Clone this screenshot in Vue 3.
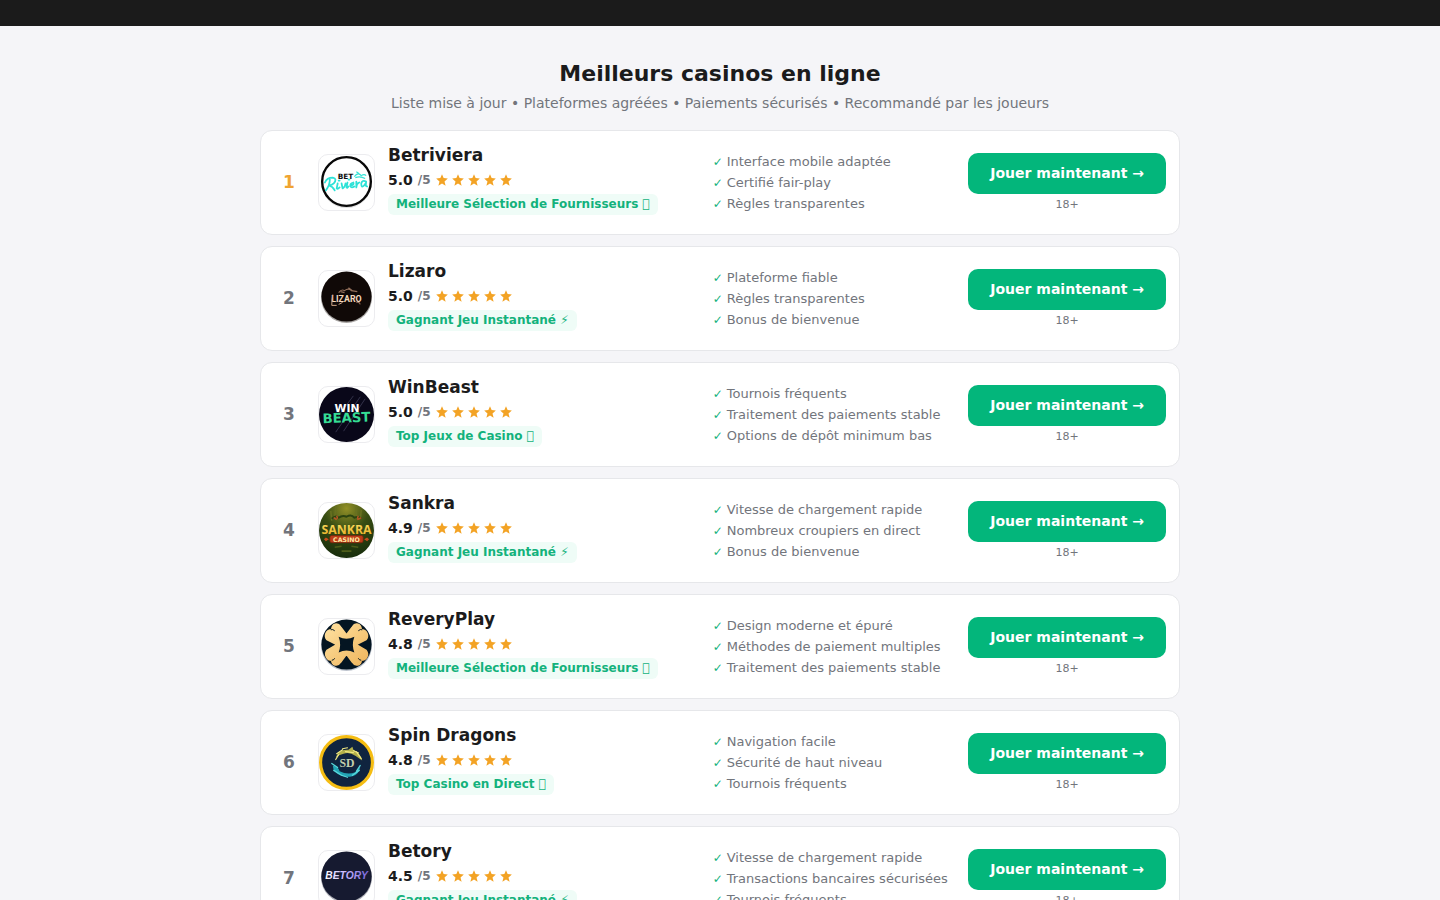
<script setup>
const casinos = [
  { id: 'betriviera', name: 'Betriviera', score: '5.0', badge: 'Meilleure Sélection de Fournisseurs \uE0FF', features: ['Interface mobile adaptée', 'Certifié fair-play', 'Règles transparentes'] },
  { id: 'lizaro', name: 'Lizaro', score: '5.0', badge: 'Gagnant Jeu Instantané ⚡', features: ['Plateforme fiable', 'Règles transparentes', 'Bonus de bienvenue'] },
  { id: 'winbeast', name: 'WinBeast', score: '5.0', badge: 'Top Jeux de Casino \uE0FF', features: ['Tournois fréquents', 'Traitement des paiements stable', 'Options de dépôt minimum bas'] },
  { id: 'sankra', name: 'Sankra', score: '4.9', badge: 'Gagnant Jeu Instantané ⚡', features: ['Vitesse de chargement rapide', 'Nombreux croupiers en direct', 'Bonus de bienvenue'] },
  { id: 'reveryplay', name: 'ReveryPlay', score: '4.8', badge: 'Meilleure Sélection de Fournisseurs \uE0FF', features: ['Design moderne et épuré', 'Méthodes de paiement multiples', 'Traitement des paiements stable'] },
  { id: 'spindragons', name: 'Spin Dragons', score: '4.8', badge: 'Top Casino en Direct \uE0FF', features: ['Navigation facile', 'Sécurité de haut niveau', 'Tournois fréquents'] },
  { id: 'betory', name: 'Betory', score: '4.5', badge: 'Gagnant Jeu Instantané ⚡', features: ['Vitesse de chargement rapide', 'Transactions bancaires sécurisées', 'Tournois fréquents'] },
]
</script>

<template>
  <div class="page">
    <header class="topbar"></header>
    <main class="content">
      <h1 class="title">Meilleurs casinos en ligne</h1>
      <p class="subtitle">Liste mise à jour • Plateformes agréées • Paiements sécurisés • Recommandé par les joueurs</p>
      <section class="list">
        <article v-for="(c, i) in casinos" :key="c.id" class="card">
          <div class="rank" :class="{ first: i === 0 }">{{ i + 1 }}</div>
          <div class="logo">
            <svg v-if="c.id === 'betriviera'" viewBox="0 0 56 56" role="img" :aria-label="c.name">
              <circle cx="28" cy="28.5" r="25.5" fill="#aaa" opacity=".4" />
              <circle cx="28" cy="27" r="24.8" fill="#fff" stroke="#080808" stroke-width="2.4" />
              <text x="27" y="24" text-anchor="middle" font-family="DejaVu Sans, sans-serif" font-weight="700" font-size="7.5" fill="#111">BET</text>
              <path d="M36 22q4-5 7-1q3-2 5 0M37 23q5-2 10 1M41 19l-3-2" fill="none" stroke="#35e3d6" stroke-width="1.2" />
              <g fill="none" stroke="#2de2d7" stroke-width="1.8" stroke-linecap="round" stroke-linejoin="round">
                <path d="M6 28q2-5 8-5q5 1 1 6q-2 2-5 2q4 1 6 5M11 25q0 6-4 11" />
                <path d="M19 29l-1 5q1 1 3-1M23 29l1 5q3-2 3-5M29 28l-1 5q1 1 2-1M32 31q4 0 3-3q-4 1-3 4q1 2 4 0M38 27v6q0-4 3-5M48 27q-4-2-5 2q0 5 3 2l2-3q-1 4 1 4" />
                <path d="M20 26h1M30 25h1" />
              </g>
            </svg>
            <svg v-else-if="c.id === 'lizaro'" viewBox="0 0 56 56" role="img" :aria-label="c.name">
              <circle cx="28" cy="27" r="26" fill="#a8a5a3" />
              <circle cx="28" cy="26" r="25.5" fill="#100907" />
              <path d="M20 22q3-4 6-2q4-3 7 0l6 1M22 21l4 1M30 17l4 3M38 32q3-1 4 2" fill="none" stroke="#906d59" stroke-width="1.2" />
              <text x="28" y="32" text-anchor="middle" font-family="Roboto, sans-serif" font-weight="700" font-size="9" fill="#f3d8be">LIZARO</text>
              <path d="M14 24q-1 6-1 11h5M20 34l4-2" fill="none" stroke="#d4a98a" />
            </svg>
            <svg v-else-if="c.id === 'winbeast'" viewBox="0 0 56 56" role="img" :aria-label="c.name">
              <circle cx="28" cy="28" r="28" fill="#090719" />
              <path d="M42 10L17 46M47 12L25 45M35 9L20 29" stroke="#34334b" stroke-width="1" />
              <text x="28.5" y="25" text-anchor="middle" font-family="DejaVu Sans, sans-serif" font-weight="700" font-size="11" fill="#fff">WIN</text>
              <g transform="rotate(-2 28 31)">
                <text x="28" y="36" text-anchor="middle" font-family="DejaVu Sans, sans-serif" font-weight="700" font-size="13.5" fill="#35dc94">BEAST</text>
              </g>
            </svg>
            <svg v-else-if="c.id === 'sankra'" viewBox="0 0 56 56" role="img" :aria-label="c.name">
              <defs>
                <radialGradient id="jungle" cx=".5" cy=".1" r=".9">
                  <stop offset="0" stop-color="#929027" />
                  <stop offset=".45" stop-color="#384d13" />
                  <stop offset="1" stop-color="#182d0c" />
                </radialGradient>
                <linearGradient id="gold" x2="0" y2="1">
                  <stop offset="0" stop-color="#ffe66a" />
                  <stop offset="1" stop-color="#e4a51d" />
                </linearGradient>
              </defs>
              <circle cx="28" cy="28" r="28" fill="url(#jungle)" />
              <path d="M12 8l1 10M17 4l-1 12M43 7l-1 10M38 4v10" stroke="#687121" stroke-width="1.6" />
              <path d="M16 45l7-1M40 45l-7-1M23 49h10" stroke="#4d5c1a" stroke-width="1.6" />
              <path d="M13 16q4-4 7-1q4-3 8-1q5-3 8 1q4-2 7 1" fill="none" stroke="#2c4410" stroke-width="2" />
              <path d="M15 15l3 2M39 17l4-2M18 13l1 3M40 13l-1 3" stroke="#b85425" stroke-width="1.5" />
              <text x="28" y="31.5" text-anchor="middle" font-family="Open Sans, sans-serif" font-weight="700" font-size="12.5" fill="url(#gold)">SANKRA</text>
              <rect x="11" y="33" width="34" height="7.5" rx="2" fill="#bd3b18" stroke="#76220c" stroke-width=".7" />
              <path d="M5 37l2-2 3 2-3 2zM46 37l3-2 2 2-2 2z" fill="#c44c1e" />
              <text x="28" y="39.2" text-anchor="middle" font-family="DejaVu Sans, sans-serif" font-weight="700" font-size="6.4" fill="#ffe8a2">CASINO</text>
            </svg>
            <svg v-else-if="c.id === 'reveryplay'" viewBox="0 0 56 56" role="img" :aria-label="c.name">
              <defs>
                <linearGradient id="petal" x1="0" y1="0" x2="1" y2="1">
                  <stop offset="0" stop-color="#ffe1a0" />
                  <stop offset="1" stop-color="#efb55d" />
                </linearGradient>
              </defs>
              <circle cx="28" cy="27" r="26" fill="#bec4ce" />
              <circle cx="28" cy="26" r="25.5" fill="#041522" />
              <path d="M28 16L22 8C19 3 13 5 13 11C7 11 5 17 8 21L18 26L8 32C5 36 8 42 13 42C13 47 19 49 22 44L28 36L34 44C37 49 43 47 43 42C49 42 51 36 48 32L38 26L48 21C51 17 49 11 43 11C43 5 37 3 34 8Z" fill="url(#petal)" stroke="url(#petal)" stroke-width="1.5" stroke-linejoin="round" />
              <path d="M20 18q8 4 16 0q-3 8 0 16q-8-4-16 0q3-8 0-16Z" fill="#041522" />
              <path d="M12 11q2-1 4 1M44 11q-2-1-4 1M13 42q2 0 3-2M43 42q-2 0-3-2" fill="none" stroke="#041522" stroke-width="1" />
            </svg>
            <svg v-else-if="c.id === 'spindragons'" viewBox="0 0 56 56" role="img" :aria-label="c.name">
              <circle cx="28" cy="28" r="26.4" fill="#10243f" stroke="#f5bd13" stroke-width="3.2" />
              <g fill="none" stroke-linecap="round" stroke-linejoin="round">
                <path d="M17 23Q20 14 30 15L34 12L35 15Q42 18 44 26L37 21Q31 17 25 19Q20 20 17 23" fill="#b3b04a" />
                <path d="M18 19l6-4M24 14l5-1M38 17l5 7M35 16l5 2M17 25l3-5M27 17l8 1" stroke="#eee783" stroke-width="1.2" />
                <path d="M14 31Q20 32 21 37Q29 41 37 38L42 32Q41 40 34 42Q25 44 18 39L15 36Z" fill="#22a4b5" />
                <path d="M13 29l6 4M15 36l8 5M23 41l6 2M34 41l7-5M38 37l4-6" stroke="#58d7db" stroke-width="1.3" />
              </g>
              <text x="28.5" y="32.5" text-anchor="middle" font-family="Liberation Serif, serif" font-weight="700" font-size="12" fill="#c4cfad">SD</text>
            </svg>
            <svg v-else viewBox="0 0 56 56" role="img" :aria-label="c.name">
              <defs>
                <linearGradient id="violet">
                  <stop offset="0" stop-color="#fff" />
                  <stop offset=".5" stop-color="#c3b2ff" />
                  <stop offset="1" stop-color="#7662d6" />
                </linearGradient>
              </defs>
              <circle cx="28" cy="27" r="26" fill="#a8a9b2" />
              <circle cx="28" cy="26" r="25.6" fill="#161a30" />
              <text x="28" y="29" text-anchor="middle" font-family="Liberation Sans, sans-serif" font-weight="700" font-style="italic" font-size="10.5" fill="url(#violet)">BETORY</text>
            </svg>
          </div>
          <div class="info">
            <h2 class="name">{{ c.name }}</h2>
            <div class="rating">
              <span class="score">{{ c.score }}</span>
              <span class="max">/5</span>
              <span class="stars" aria-hidden="true">
                <svg v-for="n in 5" :key="n" viewBox="0 0 24 24">
                  <path d="M12 17.8L18.2 22l-1.9-7.6L22 9.3l-7.2-.7L12 2 9.2 8.6 2 9.3l5.7 5.1L5.8 22z" />
                </svg>
              </span>
            </div>
            <span class="badge">{{ c.badge }}</span>
          </div>
          <ul class="features">
            <li v-for="f in c.features" :key="f">{{ f }}</li>
          </ul>
          <div class="action">
            <a class="play" href="#">Jouer maintenant →</a>
            <span class="age">18+</span>
          </div>
        </article>
      </section>
    </main>
  </div>
</template>

<style>
body {
  margin: 0;
  background: #f5f5f8;
}
</style>

<style scoped>
.page {
  min-height: 100vh;
  background: #f5f5f8;
  color: #1b1b1c;
  font-family: "DejaVu Sans", sans-serif;
}
.topbar {
  height: 26px;
  background: #1b1b1b;
}
.content {
  box-sizing: border-box;
  max-width: 920px;
  margin: 0 auto;
  padding-top: 32px;
}
.title {
  margin: 0;
  font-size: 22px;
  line-height: 32px;
  font-weight: 700;
  text-align: center;
}
.subtitle {
  margin: 0 0 14px;
  font-size: 14px;
  line-height: 26px;
  color: #72757c;
  text-align: center;
}
.list {
  display: flex;
  flex-direction: column;
  gap: 11px;
}
.card {
  display: grid;
  grid-template-columns: 30px 56px 9fr 7fr auto;
  column-gap: 14px;
  align-items: center;
  padding: 12px 13px 19px;
  border: 1px solid #e6e7ea;
  border-radius: 12px;
  background: #fff;
}
.rank {
  font-size: 17px;
  line-height: 24px;
  font-weight: 700;
  text-align: center;
  color: #72757c;
  padding-top: 6px;
}
.rank.first {
  color: #f0a431;
}
.logo {
  box-sizing: border-box;
  width: 57px;
  height: 57px;
  margin-top: 7px;
  border: 1px solid #ececef;
  border-radius: 10px;
  overflow: hidden;
}
.logo svg {
  display: block;
  width: 100%;
  height: 100%;
}
.name {
  margin: 0;
  font-size: 17px;
  line-height: 24px;
  font-weight: 700;
}
.rating {
  display: flex;
  align-items: center;
  height: 25px;
}
.score {
  font-size: 14px;
  font-weight: 700;
}
.max {
  margin: 0 4px 0 5px;
  font-size: 12px;
  font-weight: 700;
  color: #72757c;
}
.stars {
  display: flex;
  gap: 2px;
}
.stars svg {
  width: 14px;
  height: 14px;
  fill: #f3a325;
}
.badge {
  display: block;
  width: fit-content;
  margin-top: 2px;
  padding: 0 8px;
  border-radius: 6px;
  background: #effcf7;
  color: #13b27c;
  font-size: 12px;
  line-height: 21px;
  font-weight: 700;
}
.features {
  margin: 6px 0 0;
  padding: 0;
  list-style: none;
  font-size: 13px;
  line-height: 21px;
  color: #72757c;
  white-space: nowrap;
}
.features li::before {
  content: "✓";
  margin-right: 4px;
  font-size: 12px;
  line-height: 1px;
  color: #13b27c;
}
.action {
  display: flex;
  flex-direction: column;
  align-items: center;
  gap: 3px;
  padding-top: 7px;
}
.play {
  padding: 10px 22px;
  border-radius: 10px;
  background: #03b67b;
  color: #fff;
  font-size: 14px;
  line-height: 21px;
  font-weight: 700;
  text-decoration: none;
  white-space: nowrap;
}
.age {
  font-size: 11px;
  line-height: 16px;
  color: #72757c;
}
</style>
